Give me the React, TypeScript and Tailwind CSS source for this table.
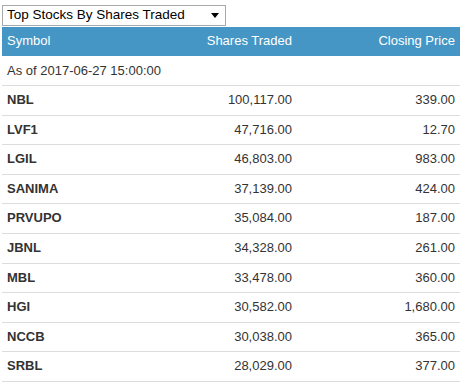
import React from "react";

const rows = [
  ["NBL", "100,117.00", "339.00"],
  ["LVF1", "47,716.00", "12.70"],
  ["LGIL", "46,803.00", "983.00"],
  ["SANIMA", "37,139.00", "424.00"],
  ["PRVUPO", "35,084.00", "187.00"],
  ["JBNL", "34,328.00", "261.00"],
  ["MBL", "33,478.00", "360.00"],
  ["HGI", "30,582.00", "1,680.00"],
  ["NCCB", "30,038.00", "365.00"],
  ["SRBL", "28,029.00", "377.00"],
];

export default function App() {
  return (
    <div
      className="w-[465px] h-[390px] bg-white text-[13px] leading-[18.57px] text-[#333] pl-[2px] pt-[5px]"
      style={{ fontFamily: '"Liberation Sans", Arial, sans-serif' }}
    >
      <div className="w-[224px] h-[21px] border border-[#a9a9a9] flex items-center justify-between pl-[4px] pr-[5px] text-[13.5px] text-black">
        <span>Top Stocks By Shares Traded</span>
        <svg width="8" height="5" viewBox="0 0 8 5" className="mr-[1px]">
          <polygon points="0,0 8,0 4,5" fill="#000" />
        </svg>
      </div>
      <table className="w-[458px] mt-[1px] border-collapse table-fixed">
        <colgroup>
          <col className="w-[150px]" />
          <col className="w-[145px]" />
          <col className="w-[163px]" />
        </colgroup>
        <thead>
          <tr className="bg-[#4596c5] text-white">
            <th className="font-normal text-left px-[5px] py-[5px]">Symbol</th>
            <th className="font-normal text-right px-[5px] py-[5px]">Shares Traded</th>
            <th className="font-normal text-right px-[5px] py-[5px]">Closing Price</th>
          </tr>
        </thead>
        <tbody>
          <tr className="border-b border-[#ddd]">
            <td colSpan={3} className="px-[5px] pt-[6px] pb-[5px]">
              As of 2017-06-27 15:00:00
            </td>
          </tr>
          {rows.map((r) => (
            <tr key={r[0]} className="border-b border-[#ddd]">
              <td className="px-[5px] py-[5px] font-bold">{r[0]}</td>
              <td className="px-[5px] py-[5px] text-right">{r[1]}</td>
              <td className="px-[5px] py-[5px] text-right">{r[2]}</td>
            </tr>
          ))}
        </tbody>
      </table>
    </div>
  );
}
